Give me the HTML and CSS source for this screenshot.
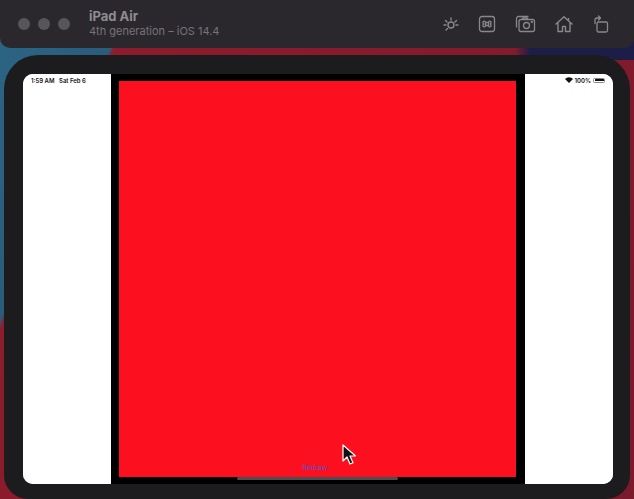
FILE: index.html
```html
<!DOCTYPE html>
<html>
<head>
<meta charset="utf-8">
<link rel="stylesheet" href="styles.css">
</head>
<body>
<div class="titlebar">
  <div class="lights"><span></span><span></span><span></span></div>
  <div class="titles">
    <div class="name">iPad Air</div>
    <div class="sub">4th generation – iOS 14.4</div>
  </div>
  <div class="tools">
    <svg width="18" height="18" viewBox="0 0 18 18" fill="none" stroke="#8a878b" stroke-width="1.4" stroke-linecap="round">
      <circle cx="9" cy="10" r="3"/>
      <path d="M9 3v2M3.5 5.5l1.5 1.5M14.5 5.5l-1.5 1.5M2 10h2M14 10h2M4 15l1.5-1.5"/>
    </svg>
    <svg width="18" height="18" viewBox="0 0 18 18" fill="none" stroke="#8a878b" stroke-width="1.3">
      <rect x="1.5" y="1.5" width="15" height="15" rx="2.5"/>
      <path d="M7.5 7.5v3M10.5 7.5v3M7.5 7.5h3M7.5 10.5h3M7.5 7.5a1.3 1.3 0 1 0-1.3 1.3M10.5 7.5a1.3 1.3 0 1 1 1.3 1.3M7.5 10.5a1.3 1.3 0 1 1-1.3-1.3M10.5 10.5a1.3 1.3 0 1 0 1.3-1.3"/>
    </svg>
    <svg width="22" height="18" viewBox="0 0 22 18" fill="none" stroke="#8a878b" stroke-width="1.3">
      <path d="M2.5 12.5v-9a2 2 0 0 1 2-2h10"/>
      <rect x="5" y="4.5" width="15.5" height="12" rx="2"/>
      <path d="M8 4.5l1-1.5h4l1 1.5"/>
      <circle cx="12.5" cy="10.5" r="3"/>
      <circle cx="17.8" cy="7" r="0.5" fill="#8a878b"/>
    </svg>
    <svg width="20" height="18" viewBox="0 0 20 18" fill="none" stroke="#8a878b" stroke-width="1.4" stroke-linejoin="round">
      <path d="M1.5 9.5L10 1.8l8.5 7.7M4 7.5v9h4.5v-5h3v5H16v-9M14.5 3v3"/>
    </svg>
    <svg width="18" height="18" viewBox="0 0 18 18" fill="none" stroke="#8a878b" stroke-width="1.3" stroke-linecap="round" stroke-linejoin="round">
      <rect x="5" y="7" width="10.5" height="10" rx="1.5"/>
      <path d="M3 8.5V5a2 2 0 0 1 2-2h3M6.5 1l2 2-2 2"/>
    </svg>
  </div>
</div>

<div class="device">
  <div class="screen">
    <div class="statusbar">
      <span class="time">1:59 AM&nbsp;&nbsp;&nbsp;Sat Feb 6</span>
      <span class="right">
        <svg width="8" height="6" viewBox="0 0 8 6"><path d="M4 6L0 2a5.6 5.6 0 0 1 8 0z" fill="#111"/></svg>
        <span>100%</span>
        <span class="battery"><span></span></span>
      </span>
    </div>
    <div class="side"></div>
    <div class="stage">
      <div class="canvas">
        <span class="redraw">Redraw</span>
      </div>
      <div class="homebar"></div>
    </div>
    <div class="side"></div>
  </div>
</div>

<svg class="cursor" width="14" height="21" viewBox="0 0 14 21">
  <path d="M1 1v16l4-4 3 7 3-1.3-3-6.7h5.5z" fill="#111" stroke="#fff" stroke-width="1.2" stroke-linejoin="round"/>
</svg>
</body>
</html>
```

FILE: styles.css
```css
* { box-sizing: border-box; }
html, body { margin: 0; }
body {
  width: 634px;
  height: 499px;
  overflow: hidden;
  position: relative;
  font-family: "Inter", "Liberation Sans", Arial, sans-serif;
  background:
    linear-gradient(to right, transparent 515px, #1c1e47 530px) top left / 100% 60px no-repeat,
    linear-gradient(112deg, #2c6586 0px, #2a5c7b 120px, #8d1c2c 124px, #7a1a2c 100%);
}
.titlebar {
  height: 48px;
  background: #2b282d;
  border-radius: 0 0 10px 10px;
  display: flex;
  align-items: center;
  padding: 0 0 0 18px;
}
.lights { display: flex; gap: 8px; }
.lights span {
  width: 12px; height: 12px; border-radius: 50%;
  background: #58555a;
}
.titles { margin-left: 19px; margin-top: -2px; }
.name {
  font-size: 13px; font-weight: 700; color: #8f8c90; line-height: 16px;
}
.sub {
  font-size: 11px; color: #767377; line-height: 14px;
}
.tools {
  margin-left: auto;
  margin-right: 24px;
  display: flex;
  align-items: center;
  gap: 18px;
}
.tools svg { display: block; }

.device {
  margin: 7px 0 0 4px;
  width: 626px;
  height: 444px;
  background: #1c1c1e;
  border-radius: 34px 34px 24px 24px;
  padding: 19px;
}
.screen {
  position: relative;
  width: 590px;
  height: 410px;
  border-radius: 10px;
  overflow: hidden;
  display: flex;
  background: #fff;
}
.side { width: 88px; background: #fff; }
.stage {
  width: 414px;
  background: #000;
  padding: 7px 9px 7px 8px;
  position: relative;
}
.canvas {
  height: 396px;
  background: #fc0f1e;
  position: relative;
  display: flex;
  justify-content: center;
  align-items: flex-end;
}
.redraw {
  font-size: 7px;
  color: #5a55c9;
  margin: 0 0 5px -5px;
  line-height: 9px;
}
.homebar {
  position: absolute;
  left: 126px;
  bottom: 4px;
  width: 161px;
  height: 3px;
  border-radius: 2px;
  background: #4e4e50;
}
.statusbar {
  position: absolute;
  left: 0; right: 0; top: 0;
  height: 12px;
  display: flex;
  justify-content: space-between;
  align-items: center;
  padding: 0 8px 0 8px;
  font-size: 6px;
  font-weight: 600;
  color: #111;
  z-index: 2;
  pointer-events: none;
}
.statusbar .right { display: flex; align-items: center; gap: 2px; }
.battery {
  width: 12px; height: 5px; border: 0.8px solid #888; border-radius: 1.5px; padding: 0.5px;
  display: flex;
}
.battery span { flex: 1; background: #111; border-radius: 0.5px; }
.cursor {
  position: absolute;
  left: 342px;
  top: 444px;
}
```
